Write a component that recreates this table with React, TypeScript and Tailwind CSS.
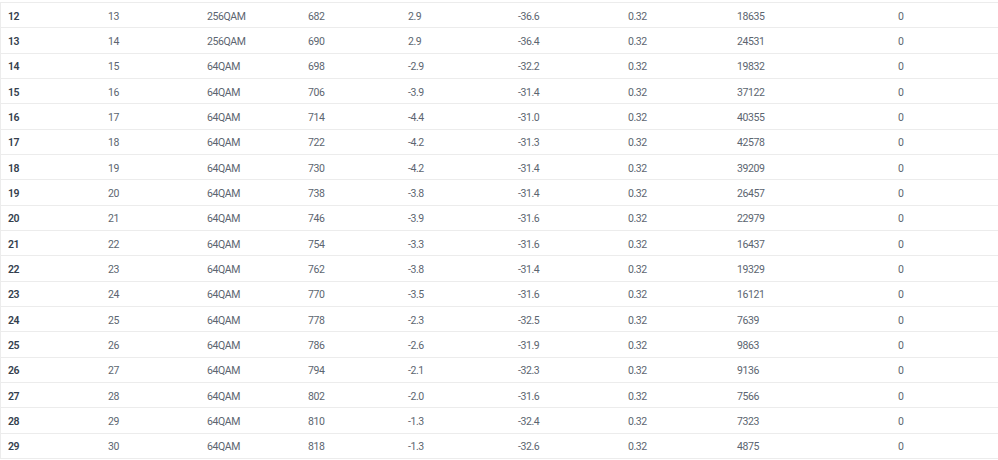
const rows: string[][] = [
  ["12", "13", "256QAM", "682", "2.9", "-36.6", "0.32", "18635", "0"],
  ["13", "14", "256QAM", "690", "2.9", "-36.4", "0.32", "24531", "0"],
  ["14", "15", "64QAM", "698", "-2.9", "-32.2", "0.32", "19832", "0"],
  ["15", "16", "64QAM", "706", "-3.9", "-31.4", "0.32", "37122", "0"],
  ["16", "17", "64QAM", "714", "-4.4", "-31.0", "0.32", "40355", "0"],
  ["17", "18", "64QAM", "722", "-4.2", "-31.3", "0.32", "42578", "0"],
  ["18", "19", "64QAM", "730", "-4.2", "-31.4", "0.32", "39209", "0"],
  ["19", "20", "64QAM", "738", "-3.8", "-31.4", "0.32", "26457", "0"],
  ["20", "21", "64QAM", "746", "-3.9", "-31.6", "0.32", "22979", "0"],
  ["21", "22", "64QAM", "754", "-3.3", "-31.6", "0.32", "16437", "0"],
  ["22", "23", "64QAM", "762", "-3.8", "-31.4", "0.32", "19329", "0"],
  ["23", "24", "64QAM", "770", "-3.5", "-31.6", "0.32", "16121", "0"],
  ["24", "25", "64QAM", "778", "-2.3", "-32.5", "0.32", "7639", "0"],
  ["25", "26", "64QAM", "786", "-2.6", "-31.9", "0.32", "9863", "0"],
  ["26", "27", "64QAM", "794", "-2.1", "-32.3", "0.32", "9136", "0"],
  ["27", "28", "64QAM", "802", "-2.0", "-31.6", "0.32", "7566", "0"],
  ["28", "29", "64QAM", "810", "-1.3", "-32.4", "0.32", "7323", "0"],
  ["29", "30", "64QAM", "818", "-1.3", "-32.6", "0.32", "4875", "0"],
];

export default function App() {
  return (
    <div className="w-[998px] h-[460px] bg-white pt-[2px] overflow-hidden font-[Roboto,sans-serif] text-[10.5px] tracking-[-0.4px]">
      <div className="border-l border-b border-[#ececec]">
        {rows.map((r) => (
          <div
            key={r[0]}
            className="grid grid-cols-[100px_99px_101px_100px_110px_110px_109px_161px_1fr] h-[25.33px] items-center border-t border-[#ececec]"
          >
            {r.map((c, i) => (
              <div
                key={i}
                className={
                  i === 0
                    ? "pl-[7px] pt-[3px] font-semibold text-[#34404d]"
                    : "pl-[7px] pt-[3px] text-[#5c6570]"
                }
              >
                {c}
              </div>
            ))}
          </div>
        ))}
      </div>
    </div>
  );
}
